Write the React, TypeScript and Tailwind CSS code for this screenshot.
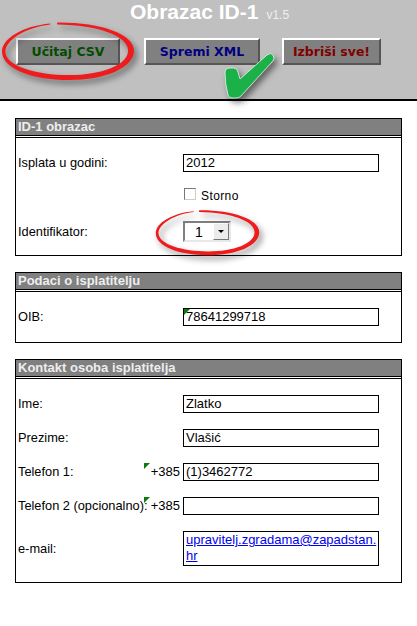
import React from 'react'

function Corner({ className }: { className: string }) {
  return (
    <svg className={className} width="6" height="6" viewBox="0 0 6 6">
      <path d="M0 0 H6 L0 6 Z" fill="#0a7a0a" />
    </svg>
  )
}

function Ring({ className }: { className: string }) {
  return (
    <svg className={className} viewBox="0 0 136 60" preserveAspectRatio="none">
      <path
        d="M50 1.5 C22 4 1 17 1 30 C1 47 30 59 69 59 C105 59 135 47 135 29 C135 12 100 0 57 0.5 L57 2.5 C98 3 129 14 129 29 C129 44 102 54 69 54 C36 54 4.5 45 4.5 30 C4.5 19 24 5.5 50 2.5 Z"
        fill="#ee1c1c"
      />
    </svg>
  )
}

function Section({ title, children }: { title: string; children: React.ReactNode }) {
  return (
    <section className="mx-[15px] border border-black">
      <h2 className="h-[17px] bg-[#808080] border-b border-black pl-[2px] text-[13px] leading-[16px] font-bold text-[#eeeeee]">{title}</h2>
      <div className="mt-px border-t border-black pt-[16px] pb-[16px] flex flex-col gap-[16px]">{children}</div>
    </section>
  )
}

function Row({ label, prefix, value, tall }: { label: string; prefix?: boolean; value?: React.ReactNode; tall?: boolean }) {
  return (
    <div className="grid grid-cols-[165px_196px] items-center pl-[2px]">
      <div className="flex items-center justify-between pr-[3px] whitespace-nowrap">
        <span className="text-[12.8px]">{label}</span>
        {prefix && (
          <span className="relative">
            <Corner className="absolute -left-[4px] -top-[1px]" />
            <span className="pl-[3px]">+385</span>
          </span>
        )}
      </div>
      <div className={`${tall ? 'h-[35px]' : 'h-[18px]'} border border-black px-[2px] leading-[16px]`}>{value}</div>
    </div>
  )
}

export default function App() {
  return (
    <div className="relative h-[626px] w-[417px] overflow-hidden bg-white text-[13px] leading-[16px] text-black font-['Liberation_Sans',Arial,sans-serif]">
      <header className="h-[101px] bg-[#c0c0c0] border-b-2 border-black">
        <div className="flex items-baseline pl-[130px] h-[26px]">
          <h1 className="text-[21px] leading-[24px] font-bold text-white">Obrazac ID-1</h1>
          <span className="ml-[8px] text-[12px] text-[#eeeeee]">v1.5</span>
        </div>
        <div className="mt-[12px] flex pl-[16px] font-['DejaVu_Sans',Verdana,sans-serif] text-[12.5px] font-bold">
          <button className="h-[27px] w-[104px] bg-[#808080] border-2 border-t-white border-l-white border-r-[#555555] border-b-[#555555] text-[#004d00]">Učitaj CSV</button>
          <button className="ml-[24px] h-[27px] w-[116px] bg-[#808080] border-2 border-t-white border-l-white border-r-[#555555] border-b-[#555555] text-[#000080]">Spremi XML</button>
          <button className="ml-[22px] h-[27px] w-[99px] bg-[#808080] border-2 border-t-white border-l-white border-r-[#555555] border-b-[#555555] text-[#800000]">Izbriši sve!</button>
        </div>
      </header>

      <div className="pt-[17px] flex flex-col gap-[16px]">
        <Section title="ID-1 obrazac">
          <Row label="Isplata u godini:" value="2012" />
          <div className="flex items-start pl-[168px] h-[17px]">
            <span className="h-[12px] w-[12px] border border-t-[#777777] border-l-[#777777] border-r-[#cccccc] border-b-[#cccccc] bg-white" />
            <span className="ml-[5px] text-[12px] tracking-[0.4px]">Storno</span>
          </div>
          <div className="grid grid-cols-[165px_196px] items-center pl-[2px] -mb-[3px]">
            <span className="text-[12.8px]">Identifikator:</span>
            <div className="flex h-[21px] w-[48px] items-center border-2 border-t-[#808080] border-l-[#808080] border-r-[#e8e8e8] border-b-[#e8e8e8]">
              <span className="flex-1 pl-[10px] text-[14px]">1</span>
              <span className="flex h-[17px] w-[16px] items-center justify-center bg-[#ececec] border border-t-white border-l-white border-r-[#777777] border-b-[#777777]">
                <span className="h-0 w-0 border-x-[3px] border-t-[3px] border-x-transparent border-t-black" />
              </span>
            </div>
          </div>
        </Section>

        <Section title="Podaci o isplatitelju">
          <Row
            label="OIB:"
            value={
              <span className="relative block">
                <Corner className="absolute -left-[2px] top-0" />
                78641299718
              </span>
            }
          />
        </Section>

        <Section title="Kontakt osoba isplatitelja">
          <Row label="Ime:" value="Zlatko" />
          <Row label="Prezime:" value="Vlašić" />
          <Row label="Telefon 1:" prefix value="(1)3462772" />
          <Row label="Telefon 2 (opcionalno):" prefix />
          <Row
            label="e-mail:"
            tall
            value={<a href="#" className="text-[#0000ee] underline">upravitelj.zgradama@zapadstan.<br />hr</a>}
          />
        </Section>
      </div>

      {/* annotations drawn over the form */}
      <Ring className="absolute left-[1px] top-[22px] h-[59px] w-[134px] drop-shadow-[3px_4px_3px_rgba(0,0,0,0.45)]" />
      <Ring className="absolute left-[155px] top-[210px] h-[46px] w-[105px] drop-shadow-[3px_4px_3px_rgba(0,0,0,0.45)]" />
      <svg className="absolute left-[220px] top-[48px] drop-shadow-[3px_4px_3px_rgba(0,0,0,0.5)]" width="60" height="56" viewBox="220 48 60 56">
        <path
          d="M225 73 Q225 68 230 68 L234 68 Q237 68 238 72 L240 79 L267 55 Q271 52 273 55 L274 58 Q274 60 272 62 L241 96 Q239 98 236 98 L232 98 Q229 98 228 95 Q225 84 225 73 Z"
          fill="#1ab248"
          stroke="#e6f5ea"
          strokeWidth="0.8"
        />
      </svg>
    </div>
  )
}
